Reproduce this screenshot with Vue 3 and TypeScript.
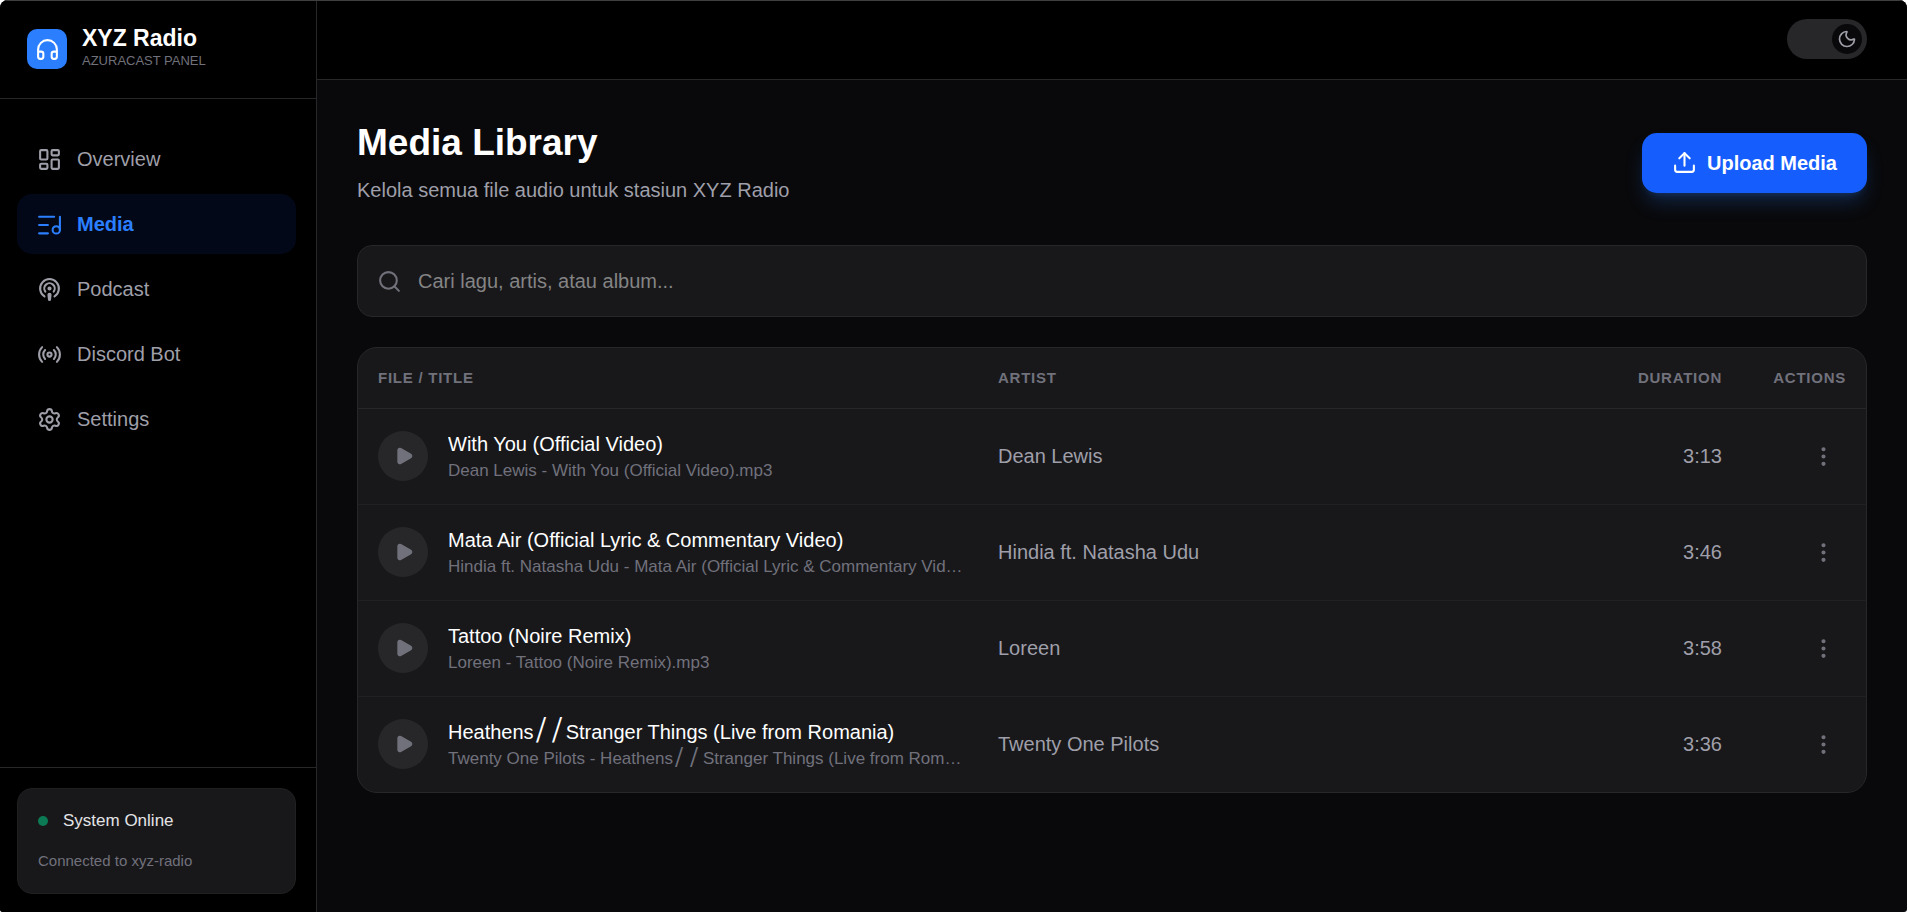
<script setup lang="ts">
import { ref } from 'vue'

interface NavItem {
  label: string
  icon: string
  active?: boolean
}

interface Track {
  title: string
  file: string
  artist: string
  duration: string
}

interface TextPart {
  text: string
  slash: boolean
}

const navItems: NavItem[] = [
  { label: 'Overview', icon: 'overview' },
  { label: 'Media', icon: 'media', active: true },
  { label: 'Podcast', icon: 'podcast' },
  { label: 'Discord Bot', icon: 'radio' },
  { label: 'Settings', icon: 'settings' },
]

const tracks: Track[] = [
  {
    title: 'With You (Official Video)',
    file: 'Dean Lewis - With You (Official Video).mp3',
    artist: 'Dean Lewis',
    duration: '3:13',
  },
  {
    title: 'Mata Air (Official Lyric & Commentary Video)',
    file: 'Hindia ft. Natasha Udu - Mata Air (Official Lyric & Commentary Video).mp3',
    artist: 'Hindia ft. Natasha Udu',
    duration: '3:46',
  },
  {
    title: 'Tattoo (Noire Remix)',
    file: 'Loreen - Tattoo (Noire Remix).mp3',
    artist: 'Loreen',
    duration: '3:58',
  },
  {
    title: 'Heathens⧸⧸Stranger Things (Live from Romania)',
    file: 'Twenty One Pilots - Heathens⧸⧸Stranger Things (Live from Romania).mp3',
    artist: 'Twenty One Pilots',
    duration: '3:36',
  },
]

// Big solidus characters are drawn taller than the text around them.
function parts(text: string): TextPart[] {
  return text
    .split(/(⧸)/)
    .filter((piece) => piece !== '')
    .map((piece) => ({ text: piece, slash: piece === '⧸' }))
}

const query = ref('')
const dark = ref(true)
</script>

<template>
  <div class="shell">
    <aside class="sidebar">
      <div class="brand">
        <span class="brand-logo">
          <svg class="icon" viewBox="0 0 24 24" aria-hidden="true">
            <path d="M3 14h3a2 2 0 0 1 2 2v3a2 2 0 0 1-2 2H5a2 2 0 0 1-2-2v-7a9 9 0 0 1 18 0v7a2 2 0 0 1-2 2h-1a2 2 0 0 1-2-2v-3a2 2 0 0 1 2-2h3" />
          </svg>
        </span>
        <div class="brand-text">
          <p class="brand-name">XYZ Radio</p>
          <p class="brand-sub">AZURACAST PANEL</p>
        </div>
      </div>

      <nav class="nav" aria-label="Main">
        <a
          v-for="item in navItems"
          :key="item.label"
          href="#"
          class="nav-link"
          :class="{ active: item.active }"
          :aria-current="item.active ? 'page' : undefined"
        >
          <svg class="icon" viewBox="0 0 24 24" aria-hidden="true">
            <template v-if="item.icon === 'overview'">
              <rect width="7" height="9" x="3" y="3" rx="1" />
              <rect width="7" height="5" x="14" y="3" rx="1" />
              <rect width="7" height="9" x="14" y="12" rx="1" />
              <rect width="7" height="5" x="3" y="16" rx="1" />
            </template>
            <template v-else-if="item.icon === 'media'">
              <path d="M2 4.5h14.5" />
              <path d="M2 12.5h8.5" />
              <path d="M2 20.5h8.5" />
              <path d="M22 17V4.5" />
              <circle cx="18.5" cy="17.2" r="3.5" />
            </template>
            <template v-else-if="item.icon === 'podcast'">
              <path d="M13 17a1 1 0 1 0-2 0l.5 4.5a0.5 0.5 0 0 0 1 0z" fill="currentColor" />
              <path d="M16.85 18.58a9 9 0 1 0-9.7 0" />
              <path d="M8 14a5 5 0 1 1 8 0" />
              <circle cx="12" cy="11" r="1" fill="currentColor" />
            </template>
            <template v-else-if="item.icon === 'radio'">
              <path d="M16.247 7.761a6 6 0 0 1 0 8.478" />
              <path d="M19.075 4.933a10 10 0 0 1 0 14.134" />
              <path d="M4.925 19.067a10 10 0 0 1 0-14.134" />
              <path d="M7.753 16.239a6 6 0 0 1 0-8.478" />
              <circle cx="12" cy="12" r="2" />
            </template>
            <template v-else>
              <path d="M9.671 4.136a2.34 2.34 0 0 1 4.659 0 2.34 2.34 0 0 0 3.319 1.915 2.34 2.34 0 0 1 2.33 4.033 2.34 2.34 0 0 0 0 3.831 2.34 2.34 0 0 1-2.33 4.033 2.34 2.34 0 0 0-3.319 1.915 2.34 2.34 0 0 1-4.659 0 2.34 2.34 0 0 0-3.32-1.915 2.34 2.34 0 0 1-2.33-4.033 2.34 2.34 0 0 0 0-3.831A2.34 2.34 0 0 1 6.35 6.051a2.34 2.34 0 0 0 3.319-1.915" />
              <circle cx="12" cy="12" r="3" />
            </template>
          </svg>
          <span>{{ item.label }}</span>
        </a>
      </nav>

      <div class="status">
        <div class="status-card">
          <p class="status-line"><span class="status-dot"></span>System Online</p>
          <p class="status-note">Connected to xyz-radio</p>
        </div>
      </div>
    </aside>

    <div class="page">
      <header class="topbar">
        <button
          type="button"
          class="theme"
          :class="{ dark }"
          role="switch"
          :aria-checked="dark"
          aria-label="Dark mode"
          @click="dark = !dark"
        >
          <span class="theme-knob">
            <svg class="icon icon-small" viewBox="0 0 24 24" aria-hidden="true">
              <path d="M20.985 12.486a9 9 0 1 1-9.473-9.472c.405-.022.617.46.402.803a6 6 0 0 0 8.268 8.268c.344-.215.825-.004.803.401" />
            </svg>
          </span>
        </button>
      </header>

      <main class="content">
        <div class="heading">
          <div>
            <h1 class="title">Media Library</h1>
            <p class="subtitle">Kelola semua file audio untuk stasiun XYZ Radio</p>
          </div>
          <button type="button" class="upload">
            <svg class="icon" viewBox="0 0 24 24" aria-hidden="true">
              <path d="M12 3v12" />
              <path d="m17 8-5-5-5 5" />
              <path d="M21 15v4a2 2 0 0 1-2 2H5a2 2 0 0 1-2-2v-4" />
            </svg>
            Upload Media
          </button>
        </div>

        <label class="search">
          <svg class="icon" viewBox="0 0 24 24" aria-hidden="true">
            <path d="m21 21-4.34-4.34" />
            <circle cx="11" cy="11" r="8" />
          </svg>
          <input
            v-model="query"
            type="text"
            class="search-input"
            placeholder="Cari lagu, artis, atau album..."
            aria-label="Cari lagu, artis, atau album"
          />
        </label>

        <table class="library">
          <thead>
            <tr class="row head">
              <th scope="col" class="col-title">FILE / TITLE</th>
              <th scope="col" class="col-artist">ARTIST</th>
              <th scope="col" class="col-duration">DURATION</th>
              <th scope="col" class="col-actions">ACTIONS</th>
            </tr>
          </thead>
          <tbody>
            <tr v-for="track in tracks" :key="track.title" class="row">
              <td class="col-title track">
                <button type="button" class="play" :aria-label="'Play ' + track.title">
                  <svg class="icon icon-small filled" viewBox="0 0 24 24" aria-hidden="true">
                    <path d="M5 5a2 2 0 0 1 3.008-1.728l11.997 6.998a2 2 0 0 1 .003 3.458l-12 7A2 2 0 0 1 5 19z" />
                  </svg>
                </button>
                <div class="track-text">
                  <p class="track-title"><span v-for="(part, i) in parts(track.title)" :key="i" :class="{ slash: part.slash }">{{ part.text }}</span></p>
                  <p class="track-file"><span v-for="(part, i) in parts(track.file)" :key="i" :class="{ slash: part.slash }">{{ part.text }}</span></p>
                </div>
              </td>
              <td class="col-artist">{{ track.artist }}</td>
              <td class="col-duration">{{ track.duration }}</td>
              <td class="col-actions">
                <button type="button" class="more" :aria-label="'Actions for ' + track.title">
                  <svg class="icon" viewBox="0 0 24 24" aria-hidden="true">
                    <circle cx="12" cy="12" r="1" />
                    <circle cx="12" cy="5" r="1" />
                    <circle cx="12" cy="19" r="1" />
                  </svg>
                </button>
              </td>
            </tr>
          </tbody>
        </table>
      </main>
    </div>
  </div>
</template>

<style>
body {
  margin: 0;
  background: #ffffff;
}
</style>

<style scoped>
* {
  box-sizing: border-box;
}

p,
h1 {
  margin: 0;
}

button {
  padding: 0;
  border: 0;
  font: inherit;
  cursor: pointer;
}

.shell {
  position: relative;
  display: flex;
  min-height: 100vh;
  margin-right: 2px;
  overflow: hidden;
  border-radius: 8px 8px 3px 3px;
  background: #09090b;
  color: #9f9fa9;
  font-family: "Liberation Sans", Arial, sans-serif;
  font-size: 20px;
  line-height: 30px;
}

.shell::before {
  content: "";
  position: absolute;
  inset: 0 0 auto;
  height: 1px;
  background: #3f3f3f;
}

.icon {
  flex: none;
  display: block;
  width: 25px;
  height: 25px;
  fill: none;
  stroke: currentColor;
  stroke-width: 2;
  stroke-linecap: round;
  stroke-linejoin: round;
}

.icon-small {
  width: 20px;
  height: 20px;
}

.filled {
  fill: currentColor;
}

.sidebar {
  flex: none;
  display: flex;
  flex-direction: column;
  width: 317px;
  border-right: 1px solid #27272a;
  background: #000000;
}

.brand {
  display: flex;
  align-items: center;
  gap: 15px;
  height: 99px;
  padding: 0 27px;
  border-bottom: 1px solid #27272a;
}

.brand-logo {
  display: grid;
  place-items: center;
  width: 40px;
  height: 40px;
  border-radius: 10px;
  background: #2b7fff;
  color: #ffffff;
}

.brand-text {
  padding-bottom: 4px;
}

.brand-name {
  color: #ffffff;
  font-size: 23px;
  font-weight: 700;
  line-height: 28px;
}

.brand-sub {
  color: #71717b;
  font-size: 13px;
  line-height: 18px;
}

.nav {
  flex: 1;
  display: flex;
  flex-direction: column;
  gap: 5px;
  padding: 30px 20px 30px 17px;
}

.nav-link {
  display: flex;
  align-items: center;
  gap: 15px;
  height: 60px;
  padding: 0 20px;
  border-radius: 15px;
  color: #9f9fa9;
  text-decoration: none;
}

.nav-link.active {
  background: #020817;
  color: #2b7fff;
  font-weight: 700;
}

.status {
  padding: 20px 20px 18px 17px;
  border-top: 1px solid #27272a;
}

.status-card {
  display: flex;
  flex-direction: column;
  gap: 16px;
  padding: 20px;
  border: 1px solid #202023;
  border-radius: 15px;
  background: #18181b;
}

.status-line {
  display: flex;
  align-items: center;
  gap: 15px;
  color: #e4e4e7;
  font-size: 17px;
  line-height: 24px;
}

.status-dot {
  width: 10px;
  height: 10px;
  border-radius: 50%;
  background: #0c7a55;
}

.status-note {
  color: #71717b;
  font-size: 15px;
  line-height: 24px;
}

.page {
  flex: 1;
  min-width: 0;
}

.topbar {
  display: flex;
  justify-content: flex-end;
  padding: 19px 40px 20px;
  border-bottom: 1px solid #27272a;
  background: #000000;
}

.theme {
  display: flex;
  align-items: center;
  width: 80px;
  height: 40px;
  padding: 5px;
  border-radius: 20px;
  background: #27272a;
}

.theme.dark {
  justify-content: flex-end;
}

.theme-knob {
  display: grid;
  place-items: center;
  width: 30px;
  height: 30px;
  border-radius: 50%;
  background: #09090b;
  color: #9f9fa9;
}

.content {
  padding: 40px;
}

.heading {
  display: flex;
  align-items: center;
  justify-content: space-between;
  margin-bottom: 40px;
}

.title {
  margin-bottom: 10px;
  color: #ffffff;
  font-size: 37px;
  font-weight: 700;
  line-height: 45px;
}

.upload {
  display: flex;
  align-items: center;
  gap: 10px;
  height: 60px;
  padding: 0 30px;
  border-radius: 15px;
  background: #155dfc;
  box-shadow: 0 12px 20px -4px rgba(43, 127, 255, 0.25), 0 5px 8px -5px rgba(43, 127, 255, 0.25);
  color: #ffffff;
  font-weight: 700;
}

.search {
  display: flex;
  align-items: center;
  gap: 16px;
  height: 72px;
  margin-bottom: 30px;
  padding: 0 19px;
  border: 1px solid #27272a;
  border-radius: 15px;
  background: #18181b;
  color: #71717b;
}

.search-input {
  flex: 1;
  min-width: 0;
  padding: 0;
  border: 0;
  outline: 0;
  background: transparent;
  color: #ffffff;
  font: inherit;
}

.search-input::placeholder {
  color: #848484;
  opacity: 1;
}

.library {
  display: block;
  border: 1px solid #27272a;
  border-radius: 20px;
  background: #18181b;
}

.library thead,
.library tbody {
  display: block;
}

.row {
  display: grid;
  grid-template-columns: repeat(12, minmax(0, 1fr));
  align-items: center;
  column-gap: 20px;
  padding: 20px 20px 21px;
  border-bottom: 1px solid #202023;
}

.row.head {
  padding-bottom: 20px;
  border-bottom-color: #27272a;
}

.library tbody .row:last-child {
  border-bottom: 0;
}

th,
td {
  padding: 0;
  text-align: left;
}

th {
  color: #71717b;
  font-size: 15px;
  font-weight: 700;
  letter-spacing: 0.05em;
  line-height: 20px;
}

.col-title {
  grid-column: span 5;
}

.col-artist {
  grid-column: span 4;
}

.col-duration {
  grid-column: span 2;
  text-align: right;
}

.col-actions {
  display: flex;
  justify-content: flex-end;
}

.track {
  display: flex;
  align-items: center;
  gap: 20px;
}

.play {
  flex: none;
  display: grid;
  place-items: center;
  width: 50px;
  height: 50px;
  padding-left: 2px;
  border-radius: 50%;
  background: #27272a;
  color: #71717b;
}

.track-text {
  flex: 1;
  min-width: 0;
  padding-right: 8px;
}

.track-title,
.track-file {
  overflow: hidden;
  text-overflow: ellipsis;
  white-space: nowrap;
}

.track-title {
  color: #ffffff;
}

.track-file {
  color: #71717b;
  font-size: 17px;
  line-height: 24px;
}

.slash {
  padding: 0 2px;
  font-size: 180%;
  line-height: 0;
  vertical-align: -15%;
}

.more {
  padding: 10px;
  border-radius: 10px;
  background: transparent;
  color: #71717b;
}
</style>
